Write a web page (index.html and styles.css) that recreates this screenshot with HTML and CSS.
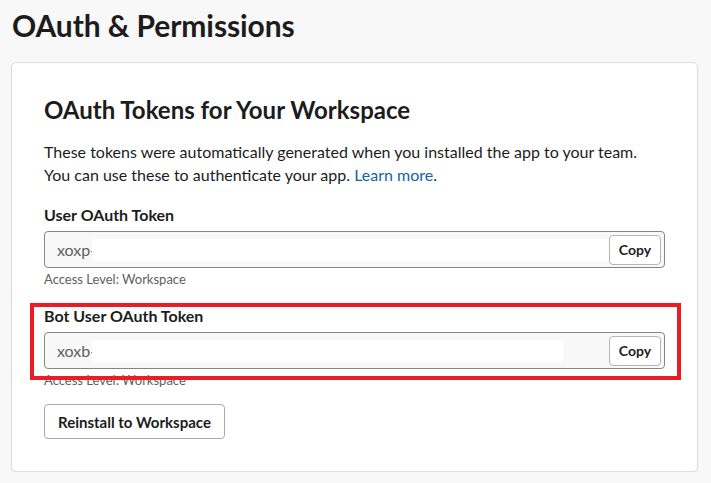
FILE: index.html
```html
<!DOCTYPE html>
<html lang="en">
<head>
<meta charset="utf-8">
<title>OAuth &amp; Permissions</title>
<link rel="stylesheet" href="styles.css">
</head>
<body>
<h1 class="page-title">OAuth &amp; Permissions</h1>
<section class="card">
  <h2 class="card-title">OAuth Tokens for Your Workspace</h2>
  <p class="intro">These tokens were automatically generated when you installed the app to your team.<br>You can use these to authenticate your app. <a class="link" href="#">Learn more</a>.</p>

  <div class="field">
    <div class="field-label">User OAuth Token</div>
    <div class="token-box">
      <span class="token-prefix">xoxp-</span>
      <span class="redact redact-long"></span>
      <span class="spacer"></span>
      <button class="copy-btn">Copy</button>
    </div>
    <div class="access">Access Level: Workspace</div>
  </div>

  <div class="field">
    <div class="field-label">Bot User OAuth Token</div>
    <div class="token-box">
      <span class="token-prefix">xoxb-</span>
      <span class="redact redact-short"></span>
      <span class="spacer"></span>
      <button class="copy-btn">Copy</button>
    </div>
    <div class="access">Access Level: Workspace</div>
    <div class="highlight-box"></div>
  </div>

  <button class="reinstall-btn">Reinstall to Workspace</button>
</section>
</body>
</html>
```

FILE: styles.css
```css
html, body {
  margin: 0;
  padding: 0;
}
body {
  background: #f8f8f8;
  font-family: Lato, "Noto Sans", sans-serif;
  color: #1d1c1d;
  padding: 0 13px 0 11px;
}
.page-title {
  margin: 0;
  padding: 7px 0 0 1px;
  font-size: 30px;
  line-height: 36px;
  font-weight: 700;
  letter-spacing: -0.1px;
  color: #1d1c1d;
}
.card {
  margin-top: 19px;
  background: #fff;
  border: 1px solid #dddddd;
  border-radius: 5px;
  box-shadow: 0 1px 2px rgba(0,0,0,0.06);
  padding: 32px 32px 32px 32px;
  display: flex;
  flex-direction: column;
  align-items: flex-start;
}
.card-title {
  margin: 0;
  font-size: 24px;
  line-height: 30px;
  font-weight: 700;
}
.intro {
  margin: 15px 0 0 0;
  font-size: 16px;
  line-height: 23px;
}
.link {
  color: #1264a3;
  text-decoration: none;
}
.field {
  position: relative;
  align-self: stretch;
  display: flex;
  flex-direction: column;
  margin-top: 18px;
}
.field-label {
  font-size: 16px;
  line-height: 22px;
  font-weight: 700;
}
.token-box {
  margin-top: 5px;
  height: 37px;
  box-sizing: border-box;
  border: 1px solid #868686;
  border-radius: 4px;
  background: #f8f8f8;
  display: flex;
  align-items: center;
  padding: 0 3px 0 12px;
}
.token-prefix {
  font-size: 16px;
  color: #616061;
}
.redact {
  display: block;
  height: 22px;
  margin-left: -4px;
  background: #fff;
}
.redact-long {
  width: 517px;
}
.redact-short {
  width: 471px;
}
.spacer {
  flex: 1;
}
.copy-btn {
  height: 30px;
  width: 52px;
  box-sizing: border-box;
  border: 1px solid #b5b5b5;
  border-radius: 4px;
  background: #fff;
  font-family: Lato, "Noto Sans", sans-serif;
  font-size: 14px;
  font-weight: 700;
  color: #1d1c1d;
  padding: 0;
}
.access {
  margin-top: 3px;
  font-size: 13px;
  line-height: 16px;
  color: #616061;
}
.highlight-box {
  position: absolute;
  left: -14px;
  top: -2px;
  width: 651px;
  height: 77px;
  box-sizing: border-box;
  border: 4px solid #ec1c24;
}
.reinstall-btn {
  margin-top: 16px;
  height: 35px;
  padding: 0 13px;
  box-sizing: border-box;
  border: 1px solid #a8a8a8;
  border-radius: 4px;
  background: #fff;
  font-family: Lato, "Noto Sans", sans-serif;
  font-size: 15px;
  font-weight: 700;
  color: #1d1c1d;
}
```
